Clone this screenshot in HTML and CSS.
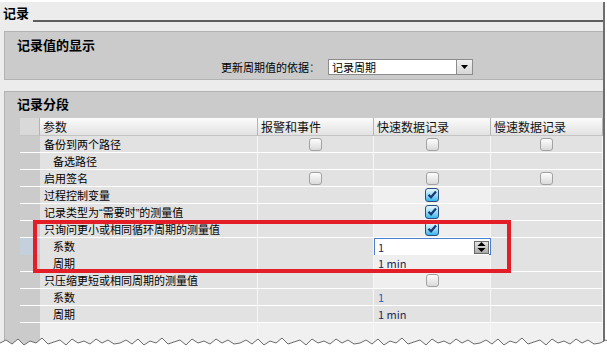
FILE: index.html
```html
<!DOCTYPE html>
<html>
<head>
<meta charset="utf-8">
<link rel="stylesheet" href="styles.css">
</head>
<body>
<div class="frame">
  <div class="titlebar"><span class="title">记录</span><span class="rule"></span></div>

  <section class="panel p1">
    <h2 class="ptitle">记录值的显示</h2>
    <div class="selrow">
      <span class="lbl">更新周期值的依据<span class="colon">：</span></span>
      <div class="select"><span class="seltext">记录周期</span><span class="selbtn"><svg width="7" height="4" viewBox="0 0 7 4"><path d="M0 0H7L3.5 4Z" fill="#000"/></svg></span></div>
    </div>
  </section>

  <section class="panel p2">
    <h2 class="ptitle">记录分段</h2>
    <div class="table">
      <div class="tr th">
        <div class="c g"></div><div class="c">参数</div><div class="c">报警和事件</div><div class="c">快速数据记录</div><div class="c">慢速数据记录</div>
      </div>
      <div class="tr">
        <div class="c g"></div><div class="c">备份到两个路径</div>
        <div class="c cb"><span class="box"></span></div><div class="c cb"><span class="box"></span></div><div class="c cb"><span class="box"></span></div>
      </div>
      <div class="tr">
        <div class="c g"></div><div class="c ind">备选路径</div><div class="c"></div><div class="c"></div><div class="c"></div>
      </div>
      <div class="tr">
        <div class="c g"></div><div class="c">启用签名</div>
        <div class="c cb"><span class="box"></span></div><div class="c cb"><span class="box"></span></div><div class="c cb"><span class="box"></span></div>
      </div>
      <div class="tr">
        <div class="c g"></div><div class="c">过程控制变量</div><div class="c"></div>
        <div class="c cb lt"><span class="box on"></span></div><div class="c"></div>
      </div>
      <div class="tr">
        <div class="c g"></div><div class="c">记录类型为<span class="q">“</span>需要时<span class="q">”</span>的测量值</div><div class="c"></div>
        <div class="c cb lt"><span class="box on"></span></div><div class="c"></div>
      </div>
      <div class="tr">
        <div class="c g"></div><div class="c">只询问更小或相同循环周期的测量值</div><div class="c"></div>
        <div class="c cb lt"><span class="box on"></span></div><div class="c"></div>
      </div>
      <div class="tr">
        <div class="c g sel"></div><div class="c ind">系数</div><div class="c"></div>
        <div class="c inp"><span class="val">1</span><span class="spin"><svg width="9" height="10" viewBox="0 0 9 10"><path d="M0.5 4H8.5L4.5 0Z M0.5 6H8.5L4.5 10Z" fill="#000"/></svg></span><span class="corner"></span></div>
        <div class="c"></div>
      </div>
      <div class="tr">
        <div class="c g"></div><div class="c ind">周期</div><div class="c"></div>
        <div class="c lt num">1 min</div><div class="c"></div>
      </div>
      <div class="tr">
        <div class="c g"></div><div class="c">只压缩更短或相同周期的测量值</div><div class="c"></div>
        <div class="c cb lt"><span class="box"></span></div><div class="c"></div>
      </div>
      <div class="tr">
        <div class="c g"></div><div class="c ind">系数</div><div class="c"></div>
        <div class="c num blue">1</div><div class="c"></div>
      </div>
      <div class="tr">
        <div class="c g"></div><div class="c ind">周期</div><div class="c"></div>
        <div class="c num">1 min</div><div class="c"></div>
      </div>
      <div class="tr empty">
        <div class="c g"></div><div class="c"></div><div class="c"></div><div class="c"></div><div class="c"></div>
      </div>
    </div>
  </section>

  <div class="redbox"></div>
</div>

<svg class="torn" width="607" height="20" viewBox="0 0 607 20">
  <defs>
    <pattern id="tp" width="120" height="20" patternUnits="userSpaceOnUse">
      <path d="M0,9 L6,6 L12,10 L18,5 L24,11 L30,7 L36,9 L42,4 L48,10 L54,8 L60,6 L66,11 L72,5 L78,9 L84,7 L90,10 L96,5 L102,9 L108,6 L114,10 L120,9 L120,20 L0,20 Z" fill="#fff"/>
      <path d="M0,9 L6,6 L12,10 L18,5 L24,11 L30,7 L36,9 L42,4 L48,10 L54,8 L60,6 L66,11 L72,5 L78,9 L84,7 L90,10 L96,5 L102,9 L108,6 L114,10 L120,9" fill="none" stroke="#6a6a6a" stroke-width="1"/>
    </pattern>
  </defs>
  <rect x="0" y="0" width="607" height="20" fill="url(#tp)"/>
</svg>
</body>
</html>
```
FILE: styles.css
```css
html, body {
  margin: 0;
  padding: 0;
  background: #ffffff;
  width: 607px;
  height: 354px;
  overflow: hidden;
  font-family: "Noto Sans CJK SC", "Liberation Sans", sans-serif;
  color: #000;
}

.frame {
  position: relative;
  width: 603px;
  height: 352px;
  margin-top: 2px;
  background: #ececec;
  border-right: 2px solid #6e6e6e;
  overflow: hidden;
}

.titlebar {
  display: flex;
  align-items: flex-end;
  height: 20px;
  padding-left: 3px;
}

.title {
  font-size: 13px;
  font-weight: bold;
  line-height: 18px;
}

.rule {
  flex: 1;
  height: 2px;
  margin-left: 4px;
  background: #5e5e5e;
}

.panel {
  margin-left: 4px;
  background: #cbcbcb;
  border-top: 1px solid #b3b3b3;
  border-left: 1px solid #b3b3b3;
}

.p1 {
  margin-top: 9px;
  border-bottom: 1px solid #b3b3b3;
  box-sizing: border-box;
  height: 49px;
}

.p2 {
  margin-top: 11px;
  height: 270px;
}

.ptitle {
  margin: 0;
  padding: 5px 0 0 12px;
  font-size: 13px;
  font-weight: bold;
  line-height: 16px;
}

.p2 .ptitle {
  padding-top: 4px;
}

.selrow {
  display: flex;
  align-items: center;
  padding-left: 216px;
  margin-top: 6px;
}

.lbl {
  font-size: 11px;
  line-height: 16px;
  width: 107px;
}

.colon {
  color: #555;
}

.select {
  display: flex;
  width: 145px;
  height: 16px;
  box-sizing: border-box;
  background: #fff;
  border: 1px solid #8c8c8c;
}

.seltext {
  flex: 1;
  font-size: 11px;
  line-height: 14px;
  padding-left: 3px;
}

.selbtn {
  width: 15px;
  display: flex;
  align-items: center;
  justify-content: center;
  background: linear-gradient(#f2f2f2, #d6d6d6);
  border-left: 1px solid #8c8c8c;
}

.table {
  margin: 6px 0 0 15px;
}

.tr {
  display: grid;
  grid-template-columns: 20px 218px 116px 117px 1fr;
  height: 17px;
}

.c {
  box-sizing: border-box;
  background: #e2e2e2;
  border-bottom: 1px solid #ffffff;
  border-right: 1px solid #f6f6f6;
  font-size: 11px;
  line-height: 16px;
  padding-left: 4px;
  white-space: nowrap;
  overflow: hidden;
  position: relative;
}

.q {
  font-family: "Liberation Sans", sans-serif;
}

.c.g {
  background: #cbcbcb;
  border-right: none;
}

.c.g.sel {
  background: #c4d0dc;
}

.c.ind {
  padding-left: 13px;
}

.c.lt {
  background: #efefef;
}

.th {
  height: 18px;
}

.th .c {
  background: linear-gradient(#fbfbfb, #e2e2e2);
  border-right: 1px solid #b4b4b4;
  border-bottom: 1px solid #c4c4c4;
  font-size: 12px;
  line-height: 17px;
  padding-left: 3px;
  color: #111;
}

.th .c.g {
  background: #d9d9d9;
}

.empty {
  height: 30px;
}

.empty .c {
  background: #f0f0f0;
  border-bottom: none;
}

.empty .c.g {
  background: #cbcbcb;
}

.cb {
  display: flex;
  align-items: center;
  justify-content: center;
  padding-left: 0;
}

.box {
  display: block;
  width: 13px;
  height: 13px;
  box-sizing: border-box;
  border: 1px solid #a2a2a2;
  border-radius: 3px;
  background: linear-gradient(#fdfdfd, #dadada);
}

.box.on {
  width: 14px;
  height: 14px;
  border: 1px solid #2c4c80;
  background:
    url("data:image/svg+xml,%3Csvg xmlns='http://www.w3.org/2000/svg' width='12' height='12' viewBox='0 0 12 12'%3E%3Cpath d='M2.5 5.8 L5 8.3 L10 2.5' fill='none' stroke='%23173a78' stroke-width='2.2'/%3E%3C/svg%3E") center / 12px 12px no-repeat,
    linear-gradient(#e4f6fe, #9fdcf6 50%, #38b4ec);
}

.inp {
  background: #fff;
  border: 1px solid #4a7fd2;
  display: flex;
  align-items: center;
  padding-left: 3px;
  overflow: visible;
}

.inp .val {
  flex: 1;
  color: #1a2a5a;
}

.spin {
  width: 15px;
  height: 13px;
  margin-right: 1px;
  display: flex;
  align-items: center;
  justify-content: center;
  box-sizing: border-box;
  border: 1px solid #6a6a6a;
  background: linear-gradient(#e6e6e6, #a9a9a9);
}

.corner {
  position: absolute;
  right: -3px;
  bottom: -3px;
  width: 4px;
  height: 4px;
  background: #2f6fd8;
}

.num {
  color: #1a2a5a;
}

.num.blue {
  color: #1f5fc0;
}

.redbox {
  position: absolute;
  left: 33px;
  top: 218px;
  width: 478px;
  height: 53px;
  box-sizing: border-box;
  border: 4px solid #e41e26;
}

.torn {
  position: absolute;
  left: 0;
  top: 334px;
}
```
